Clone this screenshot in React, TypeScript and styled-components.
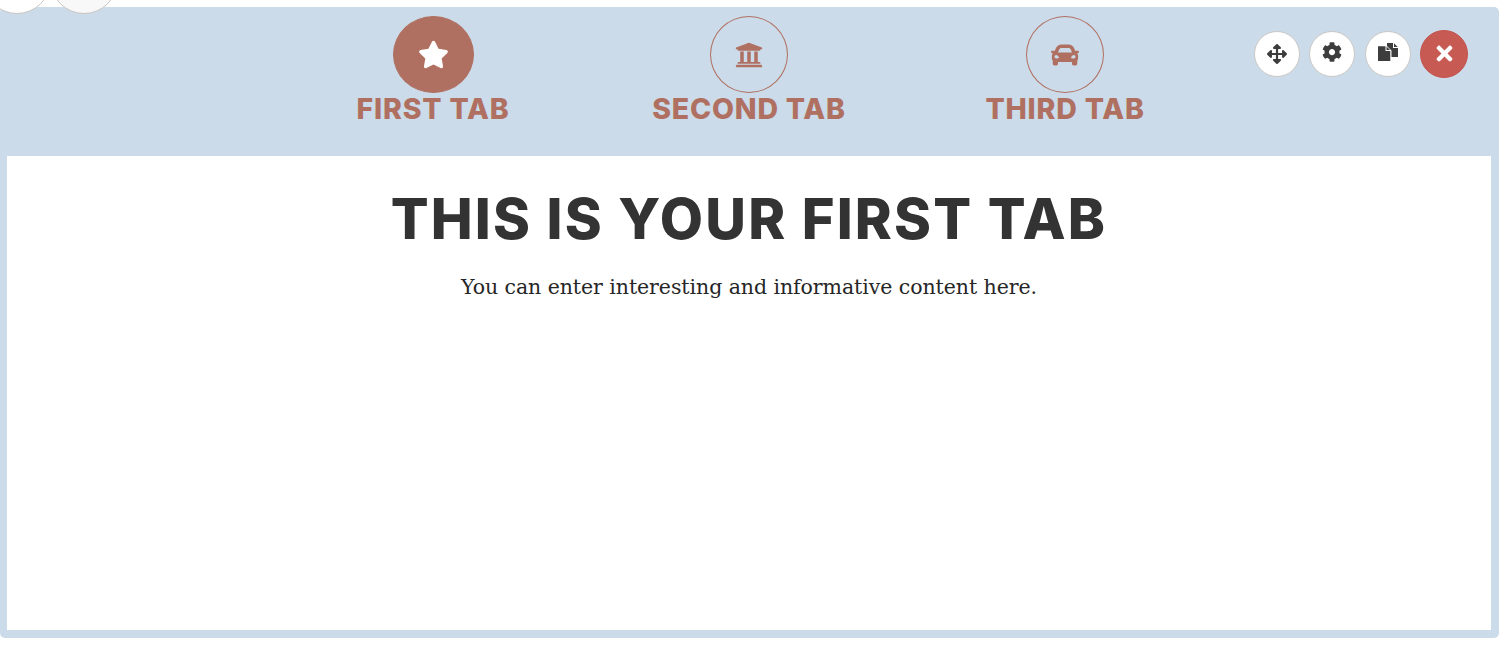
import React from "react";
import styled, { createGlobalStyle } from "styled-components";
import { FaStar, FaUniversity, FaCar, FaArrowsAlt, FaCog, FaTimes } from "react-icons/fa";

const Global = createGlobalStyle`
  html, body { margin: 0; padding: 0; background: #fff; overflow: hidden; }
  #root { width: 1504px; height: 646px; }
`;

const Page = styled.div`
  position: relative;
  width: 1504px;
  height: 646px;
  padding: 7px 5px 8px 0;
  box-sizing: border-box;
  overflow: hidden;
`;

const Handle = styled.div<{ $x: number; $tone: string }>`
  position: absolute;
  top: -54px;
  left: ${p => p.$x - 34}px;
  width: 68px;
  height: 68px;
  box-sizing: border-box;
  border-radius: 50%;
  background: ${p => p.$tone};
  border: 1px solid #c9c5c2;
`;

const Panel = styled.section`
  position: relative;
  height: 631px;
  display: flex;
  flex-direction: column;
  background: #cbdbe9;
  border-radius: 5px;
  padding: 0 8px 8px 7px;
  box-sizing: border-box;
`;

const TabBar = styled.nav`
  height: 149px;
  flex: none;
  display: grid;
  grid-template-columns: repeat(3, 316px);
  justify-content: center;
`;

const Tab = styled.div`
  display: flex;
  flex-direction: column;
  align-items: center;
  padding-top: 9px;
  box-sizing: border-box;
`;

const TabCircle = styled.div<{ $active?: boolean }>`
  width: ${p => (p.$active ? 81 : 78)}px;
  height: 77px;
  border-radius: 50%;
  box-sizing: border-box;
  display: flex;
  align-items: center;
  justify-content: center;
  color: ${p => (p.$active ? "#fff" : "#b07061")};
  background: ${p => (p.$active ? "#b07061" : "transparent")};
  border: 1px solid #b07061;
  font-size: ${p => (p.$active ? 31 : 28)}px;
`;

const TabLabel = styled.div`
  font-family: "Inter", "Liberation Sans", sans-serif;
  font-weight: 800;
  font-size: 28.5px;
  line-height: 31px;
  letter-spacing: 0.8px;
  color: #b07061;
  white-space: nowrap;
`;

const Actions = styled.div`
  position: absolute;
  top: 23px;
  right: 31px;
  display: flex;
  align-items: center;
  gap: 9.5px;
`;

const ActionButton = styled.button<{ $danger?: boolean; $lift?: number }>`
  width: ${p => (p.$danger ? 48 : 46)}px;
  height: ${p => (p.$danger ? 48 : 46)}px;
  padding: 0 0 ${p => p.$lift ?? 0}px;
  border-radius: 50%;
  box-sizing: border-box;
  display: flex;
  align-items: center;
  justify-content: center;
  font-size: ${p => (p.$danger ? 23 : 20)}px;
  color: ${p => (p.$danger ? "#fff" : "#3d3d3d")};
  background: ${p => (p.$danger ? "#c85a54" : "#fff")};
  border: 1px solid ${p => (p.$danger ? "#c4524c" : "#cbc8c5")};
`;

const Content = styled.main`
  flex: 1;
  background: #fff;
  text-align: center;
  padding-top: 32px;
  box-sizing: border-box;
`;

const Title = styled.h1`
  margin: 0;
  font-family: "Inter", "Liberation Sans", sans-serif;
  font-weight: 800;
  font-size: 56px;
  line-height: 62px;
  letter-spacing: 2.15px;
  color: #333;
  white-space: nowrap;
`;

const Body = styled.p`
  margin: 22px 0 0;
  font-family: "DejaVu Serif", "Liberation Serif", serif;
  font-size: 20.5px;
  line-height: 30px;
  letter-spacing: -0.07px;
  color: #262626;
  white-space: nowrap;
`;

const FilesIcon = () => (
  <svg width="20" height="18" viewBox="0 0 20 18" fill="currentColor" aria-hidden="true">
    <path d="M0 3.300H7.500V8H12.300V18H0Z" />
    <path d="M8.500 3.500L12 7H8.500Z" />
    <path d="M9 0H15V5H20V14H13.500V7.500L9 3Z" />
    <path d="M16 .3L19.700 4H16Z" />
  </svg>
);

const tabs = [
  { label: "FIRST TAB", icon: <FaStar />, active: true },
  { label: "SECOND TAB", icon: <FaUniversity /> },
  { label: "THIRD TAB", icon: <FaCar /> },
];

export default function App() {
  return (
    <Page>
      <Global />
      <Panel>
        <TabBar>
          {tabs.map(t => (
            <Tab key={t.label}>
              <TabCircle $active={t.active}>{t.icon}</TabCircle>
              <TabLabel>{t.label}</TabLabel>
            </Tab>
          ))}
        </TabBar>
        <Actions>
          <ActionButton><FaArrowsAlt /></ActionButton>
          <ActionButton $lift={4}><FaCog /></ActionButton>
          <ActionButton $lift={4}><FilesIcon /></ActionButton>
          <ActionButton $danger $lift={2}><FaTimes /></ActionButton>
        </Actions>
        <Content>
          <Title>THIS IS YOUR FIRST TAB</Title>
          <Body>You can enter interesting and informative content here.</Body>
        </Content>
      </Panel>
      <Handle $x={17} $tone="#ffffff" />
      <Handle $x={84} $tone="#f8f8f8" />
    </Page>
  );
}
